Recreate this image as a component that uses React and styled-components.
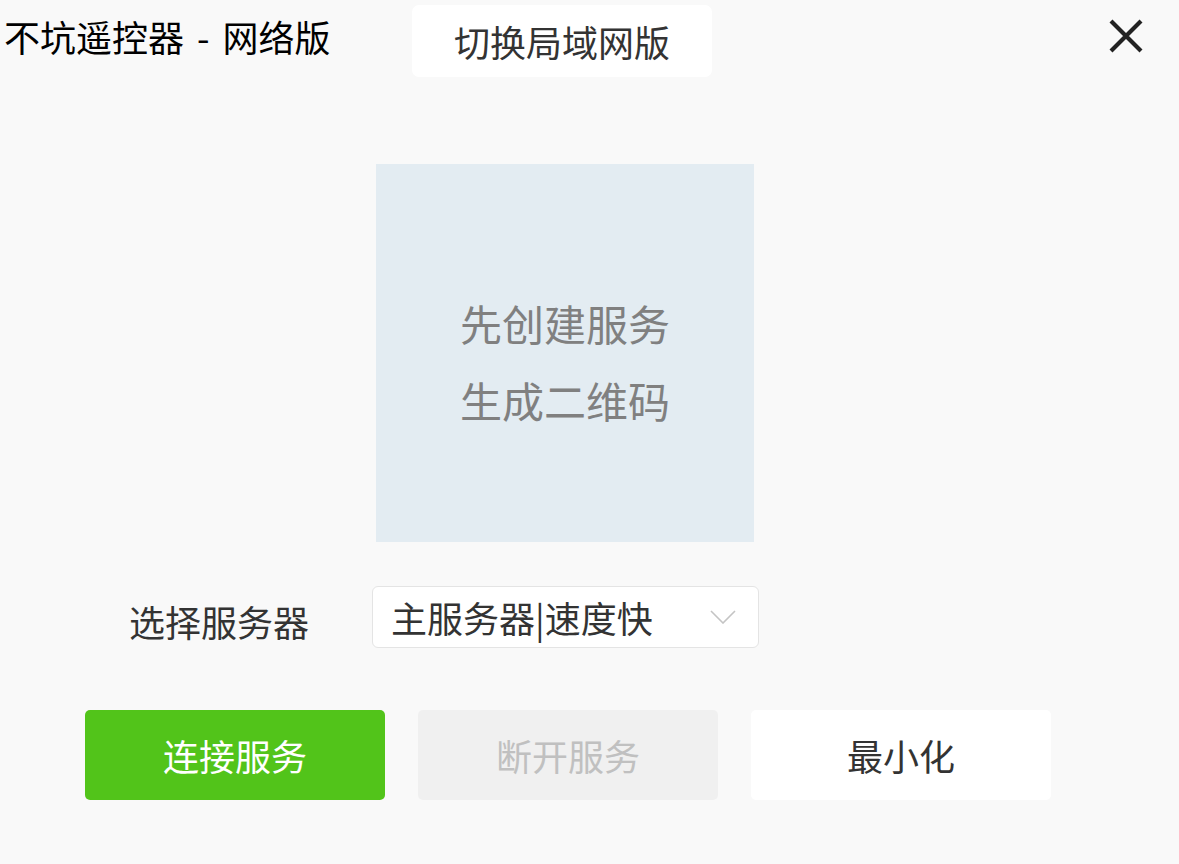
import React from "react";
import styled, { createGlobalStyle } from "styled-components";

const Global = createGlobalStyle`
  html, body { margin: 0; padding: 0; background: #f9f9f9; }
  body { font-family: "Noto Sans CJK SC", "Noto Sans", sans-serif; }
  * { box-sizing: border-box; }
`;

const Page = styled.div`
  width: 1179px;
  height: 864px;
  background: #f9f9f9;
  display: flex;
  flex-direction: column;
  overflow: hidden;
`;

const Header = styled.header`
  display: flex;
  align-items: flex-start;
  height: 82px;
`;

const Title = styled.h1`
  margin: 10px 0 0 0;
  padding-left: 4px;
  width: 412px;
  font-size: 36px;
  line-height: 52px;
  font-weight: 400;
  color: #000;
  white-space: nowrap;
  word-spacing: 5px;
`;

const SwitchButton = styled.button`
  margin-top: 5px;
  width: 300px;
  height: 72px;
  border: none;
  border-radius: 7px;
  background: #fff;
  color: #333;
  font-family: inherit;
  font-size: 36px;
  display: flex;
  align-items: center;
  justify-content: center;
  padding: 0;
  cursor: pointer;
`;

const CloseButton = styled.button`
  margin: 17px 34px 0 auto;
  width: 38px;
  height: 38px;
  border: none;
  background: transparent;
  padding: 0;
  display: flex;
  align-items: center;
  justify-content: center;
  cursor: pointer;
`;

const Main = styled.main`
  display: flex;
  flex-direction: column;
  padding-left: 85px;
`;

const QrBox = styled.div`
  margin: 82px 0 0 291px;
  width: 378px;
  height: 378px;
  background: #e3ecf2;
  display: flex;
  flex-direction: column;
  align-items: center;
  justify-content: center;
  padding-top: 15px;
  color: #808080;
  font-size: 42px;
  line-height: 77px;
`;

const SelectRow = styled.div`
  margin-top: 44px;
  display: flex;
  align-items: center;
  height: 62px;
`;

const Label = styled.label`
  margin-left: 44px;
  width: 243px;
  font-size: 36px;
  color: #333;
  padding-top: 8px;
`;

const Select = styled.div`
  width: 387px;
  height: 62px;
  background: #fff;
  border: 1px solid #e4e4e4;
  border-radius: 6px;
  display: flex;
  align-items: center;
  padding: 0 22px 0 18px;
  font-size: 36px;
  color: #333;
  justify-content: space-between;
`;

const ButtonRow = styled.div`
  margin-top: 62px;
  display: flex;
  gap: 33px;
`;

const variants = {
  primary: "background:#52c41a;color:#fff;",
  disabled: "background:#f0f0f0;color:#c0c0c0;",
  plain: "background:#fff;color:#333;",
};

const ActionButton = styled.button`
  width: 300px;
  height: 90px;
  border: none;
  border-radius: 5px;
  font-family: inherit;
  font-size: 36px;
  display: flex;
  align-items: center;
  justify-content: center;
  padding: 0;
  ${(p) => variants[p.$variant]}
`;

export default function App() {
  return (
    <>
      <Global />
      <Page>
        <Header>
          <Title>不坑遥控器 - 网络版</Title>
          <SwitchButton>切换局域网版</SwitchButton>
          <CloseButton aria-label="close">
            <svg width="34" height="34" viewBox="0 0 34 34">
              <path d="M2 2 L32 32 M32 2 L2 32" stroke="#222" strokeWidth="4.2" strokeLinecap="butt" fill="none" />
            </svg>
          </CloseButton>
        </Header>
        <Main>
          <QrBox>
            <div>先创建服务</div>
            <div>生成二维码</div>
          </QrBox>
          <SelectRow>
            <Label>选择服务器</Label>
            <Select>
              <span>主服务器|速度快</span>
              <svg width="26" height="14" viewBox="0 0 26 14">
                <path d="M1 1 L13 13 L25 1" stroke="#c4c4c4" strokeWidth="1.6" fill="none" />
              </svg>
            </Select>
          </SelectRow>
          <ButtonRow>
            <ActionButton $variant="primary">连接服务</ActionButton>
            <ActionButton $variant="disabled" disabled>断开服务</ActionButton>
            <ActionButton $variant="plain">最小化</ActionButton>
          </ButtonRow>
        </Main>
      </Page>
    </>
  );
}
